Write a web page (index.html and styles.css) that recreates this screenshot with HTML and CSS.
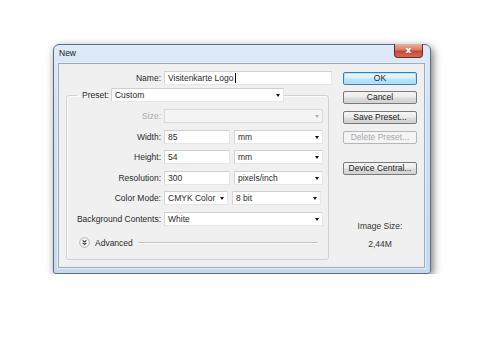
FILE: index.html
```html
<!DOCTYPE html>
<html lang="en">
<head>
    <meta charset="UTF-8">
    <meta name="viewport" content="width=device-width, initial-scale=1.0">
    <title>New</title>
    <link rel="stylesheet" href="styles.css">
</head>
<body>
    <div class="window">
        <div class="titlebar">
            <span class="title">New</span>
            <span class="close">x</span>
        </div>

        <div class="client">
            <!-- left: name + preset group -->
            <div class="main">
                <div class="row">
                    <label class="lbl">Name:</label>
                    <div class="field text name">Visitenkarte Logo<span class="caret"></span></div>
                </div>

                <fieldset class="group">
                    <legend class="preset">
                        <span class="preset-lbl">Preset:</span>
                        <div class="field select preset-sel">Custom</div>
                    </legend>

                    <div class="rows">
                        <div class="row">
                            <label class="lbl disabled">Size:</label>
                            <div class="field select off full"></div>
                        </div>
                        <div class="row">
                            <label class="lbl">Width:</label>
                            <div class="field text num">85</div>
                            <div class="field select unit">mm</div>
                        </div>
                        <div class="row">
                            <label class="lbl">Height:</label>
                            <div class="field text num">54</div>
                            <div class="field select unit">mm</div>
                        </div>
                        <div class="row">
                            <label class="lbl">Resolution:</label>
                            <div class="field text num">300</div>
                            <div class="field select unit">pixels/inch</div>
                        </div>
                        <div class="row">
                            <label class="lbl">Color Mode:</label>
                            <div class="field select mode">CMYK Color</div>
                            <div class="field select unit">8 bit</div>
                        </div>
                        <div class="row">
                            <label class="lbl">Background Contents:</label>
                            <div class="field select full">White</div>
                        </div>
                    </div>

                    <div class="advanced">
                        <svg class="adv-icon" width="11" height="11" viewBox="0 0 11 11">
                            <circle cx="5.5" cy="5.5" r="4.8" fill="#f7f7f7" stroke="#b3b3b3"/>
                            <path d="M3.6 3.4 L5.5 5 L7.4 3.4 M3.6 5.9 L5.5 7.5 L7.4 5.9" fill="none" stroke="#3a3a3a" stroke-width="1.1"/>
                        </svg>
                        <span>Advanced</span>
                        <span class="rule"></span>
                    </div>
                </fieldset>
            </div>

            <!-- right: buttons -->
            <div class="side">
                <button class="btn default">OK</button>
                <button class="btn cancel">Cancel</button>
                <button class="btn save">Save Preset...</button>
                <button class="btn delete" disabled>Delete Preset...</button>
                <button class="btn device">Device Central...</button>
                <div class="size-lbl">Image Size:</div>
                <div class="size-val">2,44M</div>
            </div>
        </div>
    </div>
</body>
</html>
```

FILE: styles.css
```css
body {
    margin: 0;
    background: #fff;
    font-family: "Liberation Sans", Arial, sans-serif;
    font-size: 8.5px;
    color: #2a2a2a;
}
.window {
    box-sizing: border-box;
    width: 378px;
    height: 230px;
    margin: 44px 0 0 53px;
    padding: 0 5px 5px 4px;
    border: 1px solid #5d6f84;
    border-radius: 6px 6px 3px 3px;
    background: linear-gradient(to bottom, #dfeaf7 0%, #d1e2f4 30%, #c5d9ef 100%);
    box-shadow: 2px 3px 9px rgba(0, 0, 0, 0.55);
}
.titlebar {
    display: flex;
    height: 18px;
}
.title {
    padding: 3px 0 0 1px;
    font-size: 8.5px;
    color: #1a1a1a;
}
.close {
    box-sizing: border-box;
    margin: -1px 2px 0 auto;
    width: 29px;
    height: 14px;
    border: 1px solid #6e2a22;
    border-top: none;
    border-radius: 0 0 4px 4px;
    background: linear-gradient(to bottom, #eab0a2 0%, #d97a68 45%, #c6473a 55%, #d46a52 100%);
    color: #fff;
    font: bold 9px/12px "DejaVu Sans", sans-serif;
    text-align: center;
}
.client {
    box-sizing: border-box;
    display: flex;
    height: 205px;
    padding: 7px 7px 0 7px;
    border: 1px solid #98adc4;
    background: #f0f0f0;
    box-shadow: 0 0 0 1px #e6eff9;
}
.main {
    width: 263px;
    flex: none;
}
.row {
    display: flex;
    align-items: center;
    gap: 3px;
    height: 14px;
}
.row + .row {
    margin-top: 6.6px;
}
.lbl {
    width: 95px;
    flex: none;
    text-align: right;
}
.rows .lbl {
    width: 94px;
}
.disabled {
    color: #a8a8a8;
}
.field {
    box-sizing: border-box;
    position: relative;
    height: 14px;
    padding: 0 3px;
    border: 1px solid;
    border-color: #d0d0d0 #e6e6e6 #e6e6e6 #d6d6d6;
    background: #fff;
    line-height: 12px;
    white-space: nowrap;
}
.select::after {
    content: "";
    position: absolute;
    right: 3px;
    top: 5px;
    border-top: 3px solid #111;
    border-left: 2.5px solid transparent;
    border-right: 2.5px solid transparent;
}
.select.off {
    background: #f4f4f4;
    border-color: #dadada;
}
.select.off::after {
    border-top-color: #b0b0b0;
}
.name {
    width: 168px;
    flex: none;
}
.caret {
    display: inline-block;
    width: 1px;
    height: 10px;
    margin-left: 1px;
    vertical-align: -2px;
    background: #000;
}
.num {
    width: 66px;
}
.unit {
    width: 89px;
    margin-left: 1px;
}
.mode {
    width: 64px;
}
.full {
    width: 159px;
}
.group {
    box-sizing: border-box;
    height: 172px;
    margin: 3px 0 0;
    padding: 7px 0 0;
    border: 1px solid #d2d2d2;
    border-radius: 3px;
    box-shadow: inset 1px 1px 0 #fbfbfb;
}
.preset {
    display: flex;
    align-items: center;
    gap: 2px;
    margin-left: 10px;
    padding: 0 0 0 5px;
}
.preset-sel {
    width: 173px;
}
.advanced {
    display: flex;
    align-items: center;
    height: 12px;
    margin: 11px 10px 0 12px;
}
.adv-icon {
    flex: none;
    margin-right: 5px;
}
.rule {
    flex: 1;
    height: 0;
    margin-left: 5px;
    border-top: 1px solid #c4c4c4;
    border-bottom: 1px solid #fff;
}
.side {
    display: flex;
    flex-direction: column;
    width: 74px;
    margin-left: 14px;
}
.btn {
    box-sizing: border-box;
    height: 13px;
    padding: 0;
    border: 1px solid #7a7a7a;
    border-radius: 2px;
    background: linear-gradient(to bottom, #f4f4f4 0%, #ececec 48%, #dddddd 52%, #d2d2d2 100%);
    font-family: "Liberation Sans", Arial, sans-serif;
    font-size: 8.5px;
    line-height: 11px;
    color: #222;
}
.btn.default {
    margin-top: 1px;
    border-color: #3c7fb1;
    background: linear-gradient(to bottom, #eaf6fd 0%, #d9f0fc 48%, #bee6fd 52%, #a7d9f5 100%);
    box-shadow: inset 0 0 0 1px #b6e3fb;
}
.btn.cancel {
    margin-top: 6px;
}
.btn.save {
    margin-top: 7px;
}
.btn.delete {
    margin-top: 7px;
    border-color: #b3b7ba;
    background: #f4f4f4;
    color: #a8a8a8;
}
.btn.device {
    margin-top: 18px;
}
.size-lbl {
    margin-top: 45px;
    line-height: 12px;
    text-align: center;
    color: #333;
}
.size-val {
    margin-top: 6px;
    line-height: 12px;
    text-align: center;
    color: #333;
}
```
